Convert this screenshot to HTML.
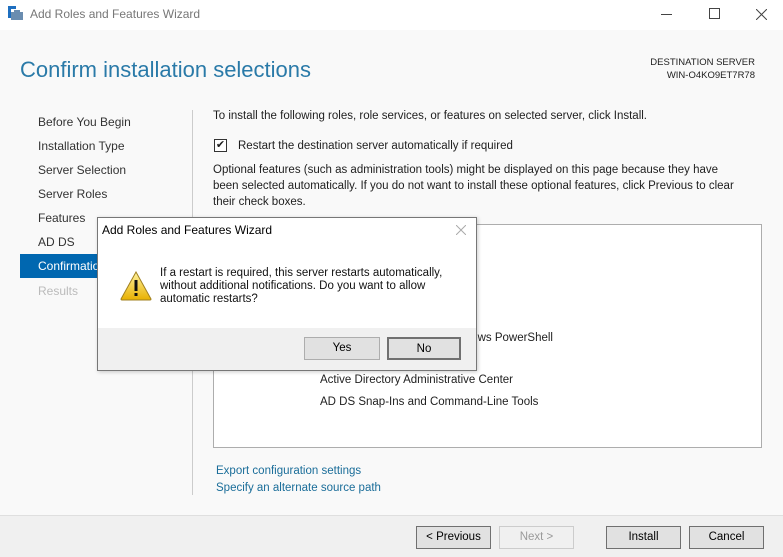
<!DOCTYPE html>
<html><head><style>
*{margin:0;padding:0;box-sizing:border-box}
body{width:783px;height:557px;position:relative;overflow:hidden;background:#f9f9f9;font-family:"Liberation Sans",sans-serif;font-size:11.5px;color:#1e1e1e}
.a{position:absolute;white-space:nowrap}
.btn{position:absolute;height:23px;border:1px solid #adadad;background:#e1e1e1;text-align:center;line-height:21px;font-size:11.5px;color:#000}
</style></head><body>
<div class="a" style="left:0;top:0;width:783px;height:30px;background:#fff"></div>
<svg class="a" style="left:8px;top:6px" width="16" height="16"><rect x="0" y="0" width="3" height="12" fill="#1e6fc0"/><rect x="0" y="0" width="8" height="3" fill="#1e6fc0"/><rect x="3" y="6" width="12" height="8" fill="#6a8db0"/><rect x="6" y="4" width="6" height="3" fill="#6a8db0"/></svg>
<div class="a" style="left:30px;top:7px;font-size:12px;color:#777">Add Roles and Features Wizard</div>
<div class="a" style="left:661px;top:14px;width:11px;height:1px;background:#444"></div>
<div class="a" style="left:709px;top:8px;width:11px;height:11px;border:1px solid #444"></div>
<svg class="a" style="left:756px;top:9px" width="11" height="11"><path d="M0 0L11 11M11 0L0 11" stroke="#444" stroke-width="1"/></svg>
<div class="a" style="left:20px;top:57px;font-size:22px;color:#2a7aa8">Confirm installation selections</div>
<div class="a" style="left:600px;top:56px;width:155px;text-align:right;font-size:9.5px;line-height:13px;color:#1e1e1e">DESTINATION SERVER<br>WIN-O4KO9ET7R78</div>
<div class="a" style="left:192px;top:110px;width:1px;height:385px;background:#ccc"></div>
<div class="a" style="left:38px;top:110px;line-height:24px;font-size:12px;color:#333">Before You Begin<br>Installation Type<br>Server Selection<br>Server Roles<br>Features<br>AD DS</div>
<div class="a" style="left:20px;top:254px;width:172px;height:24px;background:#0067b0"></div>
<div class="a" style="left:38px;top:259px;font-size:12px;color:#fff">Confirmation</div>
<div class="a" style="left:38px;top:284px;font-size:12px;color:#bbb">Results</div>
<div class="a" style="left:213px;top:110px">To install the following roles, role services, or features on selected server, click Install.</div>
<div class="a" style="left:214px;top:139px;width:13px;height:13px;border:1px solid #333;background:#fff;font-size:11px;line-height:11px;text-align:center">✔</div>
<div class="a" style="left:238px;top:140px">Restart the destination server automatically if required</div>
<div class="a" style="left:213px;top:162px;line-height:16px">Optional features (such as administration tools) might be displayed on this page because they have<br>been selected automatically. If you do not want to install these optional features, click Previous to clear<br>their check boxes.</div>
<div class="a" style="left:213px;top:224px;width:549px;height:224px;background:#fff;border:1px solid #adadad"></div>
<div class="a" style="right:230px;top:332px">Group Policy Management, Remote Server Administration Tools, Windows PowerShell</div>
<div class="a" style="left:320px;top:374px">Active Directory Administrative Center</div>
<div class="a" style="left:320px;top:396px">AD DS Snap-Ins and Command-Line Tools</div>
<div class="a" style="left:216px;top:465px;color:#1a6d99">Export configuration settings</div>
<div class="a" style="left:216px;top:482px;color:#1a6d99">Specify an alternate source path</div>
<div class="a" style="left:0;top:515px;width:783px;height:42px;background:#f0f0f0;border-top:1px solid #dfdfdf"></div>
<div class="btn" style="left:416px;top:526px;width:75px;border-color:#707070">&lt; Previous</div>
<div class="btn" style="left:499px;top:526px;width:75px;background:#f0f0f0;border-color:#ccc;color:#9a9a9a">Next &gt;</div>
<div class="btn" style="left:606px;top:526px;width:75px;border-color:#707070">Install</div>
<div class="btn" style="left:689px;top:526px;width:75px;border-color:#707070">Cancel</div>
<div class="a" style="left:97px;top:217px;width:380px;height:154px;background:#fff;border:1px solid #777;box-shadow:1px 1px 4px rgba(0,0,0,.2)">
<div class="a" style="left:0;top:110px;width:378px;height:42px;background:#f0f0f0"></div>
<div class="a" style="left:4px;top:5px;font-size:12px;color:#000">Add Roles and Features Wizard</div>
<svg class="a" style="left:358px;top:7px" width="10" height="10"><path d="M0 0L10 10M10 0L0 10" stroke="#aaa" stroke-width="1"/></svg>
<svg class="a" style="left:22px;top:53px" width="32" height="30"><defs><linearGradient id="g" x1="0" y1="0" x2="0" y2="1"><stop offset="0" stop-color="#fff3a0"/><stop offset="1" stop-color="#e8b000"/></linearGradient></defs><path d="M16 1 L31 28 Q31 29 30 29 L2 29 Q1 29 1 28 Z" fill="url(#g)" stroke="#a08020" stroke-width="1"/><rect x="14.5" y="9" width="3" height="11" fill="#111"/><rect x="14.5" y="22" width="3" height="3" fill="#111"/></svg>
<div class="a" style="left:62px;top:49px;line-height:13px;font-size:11.5px;color:#111">If a restart is required, this server restarts automatically,<br>without additional notifications. Do you want to allow<br>automatic restarts?</div>
<div class="btn" style="left:206px;top:119px;width:76px;height:23px;border-color:#adadad">Yes</div>
<div class="btn" style="left:289px;top:119px;width:74px;height:23px;border:2px solid #707070">No</div>
</div>
</body></html>
